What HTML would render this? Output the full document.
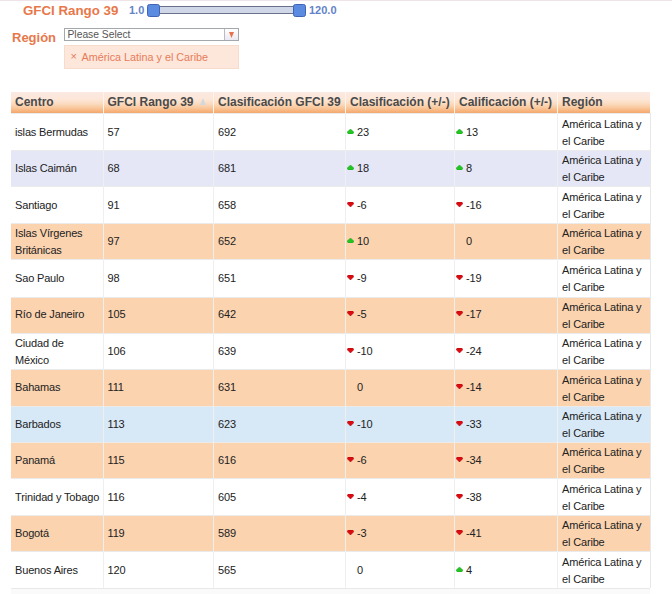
<!DOCTYPE html>
<html><head><meta charset="utf-8">
<style>
html,body{margin:0;padding:0;background:#fff;width:672px;height:594px;overflow:hidden;position:relative;font-family:"Liberation Sans",sans-serif;}
.topline{position:absolute;left:0;top:0;width:672px;height:1px;background:#eee4ea;}
.lbl{position:absolute;color:#e8784a;font-weight:bold;font-size:13px;line-height:15px;white-space:nowrap;}
.num{position:absolute;color:#6283c8;font-weight:bold;font-size:11px;line-height:12px;white-space:nowrap;}
.track{position:absolute;left:152px;top:6px;width:148px;height:6px;background:#d0d8e8;border:1px solid #6a7090;}
.handle{position:absolute;top:4px;width:11px;height:11px;background:#5b8be0;border:1px solid #4163b5;border-radius:2.5px;}
.sel{position:absolute;left:64px;top:28px;width:173px;height:11px;border:1px solid #a3a8ad;background:#fff;}
.sel span{position:absolute;left:2.5px;top:-1px;font-size:10.3px;line-height:13px;color:#555;white-space:nowrap;}
.sel .arr{position:absolute;right:0;top:0;width:13px;height:11px;border-left:1px solid #b8bcc0;background:linear-gradient(#fff,#ebe8f2);}
.sel .arr i{position:absolute;left:3.5px;top:3px;width:0;height:0;border-left:2.7px solid transparent;border-right:2.7px solid transparent;border-top:6px solid #e8704a;}
.tok{position:absolute;left:64px;top:45px;width:173px;height:22px;background:#fde7da;border:1px solid #f6dccd;}
.tok span{position:absolute;top:4.5px;font-size:10.7px;line-height:13px;color:#e77b5a;white-space:nowrap;}
.tok .x{left:5.5px;font-size:11px;top:4px;}
.tok .t{left:16.5px;font-size:10.8px;}
table{position:absolute;left:11px;top:92px;border-collapse:collapse;table-layout:fixed;width:639px;}
th{height:21px;padding:0 0 0 4px;text-align:left;font-size:12px;font-weight:bold;color:#4a4a4a;background:linear-gradient(#fbe9e2 0%,#fce6d7 35%,#fbdcc1 55%,#f9c89d 75%,#f7b47e 90%,#f6aa6e 97%,#e2a47e 100%);border-left:1px solid #fff3ea;white-space:nowrap;overflow:hidden;box-sizing:border-box;}
th:first-child{border-left:none;}
td{padding:0 0 0 4px;font-size:11px;letter-spacing:-0.16px;line-height:16.5px;color:#222;border-left:1px solid #efefef;border-top:1px solid #ebebeb;box-sizing:border-box;vertical-align:middle;}
td:first-child{border-left:none;}
tr.dn1 td:not(.two){padding-top:2px;}
tr.up1 td:not(.two){padding-bottom:2px;}
tr.w td{background:#fff;}
tr.o td{background:#fbd3af;}
tr.l td{background:#e5e7f7;}
tr.b td{background:#d7e8f6;}
td:last-child{border-right:1px solid #e8e8e8;}
td.c{padding-left:1px;}
td.two{line-height:17px;}
.r{position:relative;top:1px;}
.sort{display:inline-block;margin-left:6px;width:0;height:0;border-left:3.7px solid transparent;border-right:3.7px solid transparent;border-bottom:7px solid #d3d8dc;vertical-align:1px;}
.foot{position:absolute;left:11px;top:588px;width:639px;height:6px;background:#fafafa;border-top:1px solid #e9e9e9;}
.ic{display:inline-block;vertical-align:2px;margin-right:3px;}
.ic0{display:inline-block;width:10px;}
</style></head><body>
<div class="topline"></div>
<div class="lbl" style="left:23px;top:2.5px;font-size:13.3px;">GFCI Rango 39</div>
<div class="num" style="left:129px;top:4px;">1.0</div>
<div class="track"></div>
<div class="handle" style="left:147px;"></div>
<div class="handle" style="left:293px;"></div>
<div class="num" style="left:309px;top:4px;">120.0</div>
<div class="lbl" style="left:12px;top:30px;">Región</div>
<div class="sel"><span>Please Select</span><div class="arr"><svg width="7" height="7" viewBox="0 0 7 7" style="position:absolute;left:2.5px;top:3px"><polygon points="1,0 6,0 3.5,6" fill="#e8704a"/></svg></div></div>
<div class="tok"><span class="x">×</span><span class="t">América Latina y el Caribe</span></div>

<table>
<colgroup><col style="width:92px"><col style="width:110.5px"><col style="width:132px"><col style="width:109px"><col style="width:103px"><col style="width:92.5px"></colgroup>
<tr><th>Centro</th><th>GFCI Rango 39<span class="sort"></span></th><th>Clasificación GFCI 39</th><th>Clasificación (+/-)</th><th>Calificación (+/-)</th><th>Región</th></tr>
<tr class="w dn1" style="height:37px"><td>islas Bermudas</td><td>57</td><td>692</td><td class="c"><svg class="ic" width="7" height="5" viewBox="0 0 7 5"><polygon points="3.5,0 7,3.3 5.6,5 1.4,5 0,3.3" fill="#22c522" stroke="#139a13" stroke-width="0.5"/></svg>23</td><td class="c"><svg class="ic" width="7" height="5" viewBox="0 0 7 5"><polygon points="3.5,0 7,3.3 5.6,5 1.4,5 0,3.3" fill="#22c522" stroke="#139a13" stroke-width="0.5"/></svg>13</td><td class="two"><span class="r">América Latina y<br>el Caribe</span></td></tr>
<tr class="l" style="height:36px"><td>Islas Caimán</td><td>68</td><td>681</td><td class="c"><svg class="ic" width="7" height="5" viewBox="0 0 7 5"><polygon points="3.5,0 7,3.3 5.6,5 1.4,5 0,3.3" fill="#22c522" stroke="#139a13" stroke-width="0.5"/></svg>18</td><td class="c"><svg class="ic" width="7" height="5" viewBox="0 0 7 5"><polygon points="3.5,0 7,3.3 5.6,5 1.4,5 0,3.3" fill="#22c522" stroke="#139a13" stroke-width="0.5"/></svg>8</td><td class="two"><span class="r">América Latina y<br>el Caribe</span></td></tr>
<tr class="w dn1" style="height:37px"><td>Santiago</td><td>91</td><td>658</td><td class="c"><svg class="ic" width="7" height="5" viewBox="0 0 7 5"><polygon points="1.4,0 5.6,0 7,1.5 3.5,5 0,1.5" fill="#dd0a10" stroke="#a00008" stroke-width="0.5"/></svg>-6</td><td class="c"><svg class="ic" width="7" height="5" viewBox="0 0 7 5"><polygon points="1.4,0 5.6,0 7,1.5 3.5,5 0,1.5" fill="#dd0a10" stroke="#a00008" stroke-width="0.5"/></svg>-16</td><td class="two"><span class="r">América Latina y<br>el Caribe</span></td></tr>
<tr class="o" style="height:36px"><td class="two"><span class="r">Islas Vírgenes<br>Británicas</span></td><td>97</td><td>652</td><td class="c"><svg class="ic" width="7" height="5" viewBox="0 0 7 5"><polygon points="3.5,0 7,3.3 5.6,5 1.4,5 0,3.3" fill="#22c522" stroke="#139a13" stroke-width="0.5"/></svg>10</td><td class="c"><span class="ic0"></span>0</td><td class="two"><span class="r">América Latina y<br>el Caribe</span></td></tr>
<tr class="w" style="height:38px"><td>Sao Paulo</td><td>98</td><td>651</td><td class="c"><svg class="ic" width="7" height="5" viewBox="0 0 7 5"><polygon points="1.4,0 5.6,0 7,1.5 3.5,5 0,1.5" fill="#dd0a10" stroke="#a00008" stroke-width="0.5"/></svg>-9</td><td class="c"><svg class="ic" width="7" height="5" viewBox="0 0 7 5"><polygon points="1.4,0 5.6,0 7,1.5 3.5,5 0,1.5" fill="#dd0a10" stroke="#a00008" stroke-width="0.5"/></svg>-19</td><td class="two"><span class="r">América Latina y<br>el Caribe</span></td></tr>
<tr class="o up1" style="height:36px"><td>Río de Janeiro</td><td>105</td><td>642</td><td class="c"><svg class="ic" width="7" height="5" viewBox="0 0 7 5"><polygon points="1.4,0 5.6,0 7,1.5 3.5,5 0,1.5" fill="#dd0a10" stroke="#a00008" stroke-width="0.5"/></svg>-5</td><td class="c"><svg class="ic" width="7" height="5" viewBox="0 0 7 5"><polygon points="1.4,0 5.6,0 7,1.5 3.5,5 0,1.5" fill="#dd0a10" stroke="#a00008" stroke-width="0.5"/></svg>-17</td><td class="two"><span class="r">América Latina y<br>el Caribe</span></td></tr>
<tr class="w" style="height:36px"><td class="two"><span class="r">Ciudad de<br>México</span></td><td>106</td><td>639</td><td class="c"><svg class="ic" width="7" height="5" viewBox="0 0 7 5"><polygon points="1.4,0 5.6,0 7,1.5 3.5,5 0,1.5" fill="#dd0a10" stroke="#a00008" stroke-width="0.5"/></svg>-10</td><td class="c"><svg class="ic" width="7" height="5" viewBox="0 0 7 5"><polygon points="1.4,0 5.6,0 7,1.5 3.5,5 0,1.5" fill="#dd0a10" stroke="#a00008" stroke-width="0.5"/></svg>-24</td><td class="two"><span class="r">América Latina y<br>el Caribe</span></td></tr>
<tr class="o" style="height:37px"><td>Bahamas</td><td>111</td><td>631</td><td class="c"><span class="ic0"></span>0</td><td class="c"><svg class="ic" width="7" height="5" viewBox="0 0 7 5"><polygon points="1.4,0 5.6,0 7,1.5 3.5,5 0,1.5" fill="#dd0a10" stroke="#a00008" stroke-width="0.5"/></svg>-14</td><td class="two"><span class="r">América Latina y<br>el Caribe</span></td></tr>
<tr class="b" style="height:36px"><td>Barbados</td><td>113</td><td>623</td><td class="c"><svg class="ic" width="7" height="5" viewBox="0 0 7 5"><polygon points="1.4,0 5.6,0 7,1.5 3.5,5 0,1.5" fill="#dd0a10" stroke="#a00008" stroke-width="0.5"/></svg>-10</td><td class="c"><svg class="ic" width="7" height="5" viewBox="0 0 7 5"><polygon points="1.4,0 5.6,0 7,1.5 3.5,5 0,1.5" fill="#dd0a10" stroke="#a00008" stroke-width="0.5"/></svg>-33</td><td class="two"><span class="r">América Latina y<br>el Caribe</span></td></tr>
<tr class="o" style="height:36px"><td>Panamá</td><td>115</td><td>616</td><td class="c"><svg class="ic" width="7" height="5" viewBox="0 0 7 5"><polygon points="1.4,0 5.6,0 7,1.5 3.5,5 0,1.5" fill="#dd0a10" stroke="#a00008" stroke-width="0.5"/></svg>-6</td><td class="c"><svg class="ic" width="7" height="5" viewBox="0 0 7 5"><polygon points="1.4,0 5.6,0 7,1.5 3.5,5 0,1.5" fill="#dd0a10" stroke="#a00008" stroke-width="0.5"/></svg>-34</td><td class="two"><span class="r">América Latina y<br>el Caribe</span></td></tr>
<tr class="w dn1" style="height:37px"><td>Trinidad y Tobago</td><td>116</td><td>605</td><td class="c"><svg class="ic" width="7" height="5" viewBox="0 0 7 5"><polygon points="1.4,0 5.6,0 7,1.5 3.5,5 0,1.5" fill="#dd0a10" stroke="#a00008" stroke-width="0.5"/></svg>-4</td><td class="c"><svg class="ic" width="7" height="5" viewBox="0 0 7 5"><polygon points="1.4,0 5.6,0 7,1.5 3.5,5 0,1.5" fill="#dd0a10" stroke="#a00008" stroke-width="0.5"/></svg>-38</td><td class="two"><span class="r">América Latina y<br>el Caribe</span></td></tr>
<tr class="o" style="height:36px"><td>Bogotá</td><td>119</td><td>589</td><td class="c"><svg class="ic" width="7" height="5" viewBox="0 0 7 5"><polygon points="1.4,0 5.6,0 7,1.5 3.5,5 0,1.5" fill="#dd0a10" stroke="#a00008" stroke-width="0.5"/></svg>-3</td><td class="c"><svg class="ic" width="7" height="5" viewBox="0 0 7 5"><polygon points="1.4,0 5.6,0 7,1.5 3.5,5 0,1.5" fill="#dd0a10" stroke="#a00008" stroke-width="0.5"/></svg>-41</td><td class="two"><span class="r">América Latina y<br>el Caribe</span></td></tr>
<tr class="w" style="height:37px"><td>Buenos Aires</td><td>120</td><td>565</td><td class="c"><span class="ic0"></span>0</td><td class="c"><svg class="ic" width="7" height="5" viewBox="0 0 7 5"><polygon points="3.5,0 7,3.3 5.6,5 1.4,5 0,3.3" fill="#22c522" stroke="#139a13" stroke-width="0.5"/></svg>4</td><td class="two"><span class="r">América Latina y<br>el Caribe</span></td></tr>
</table>
<div class="foot"></div>
</body></html>
